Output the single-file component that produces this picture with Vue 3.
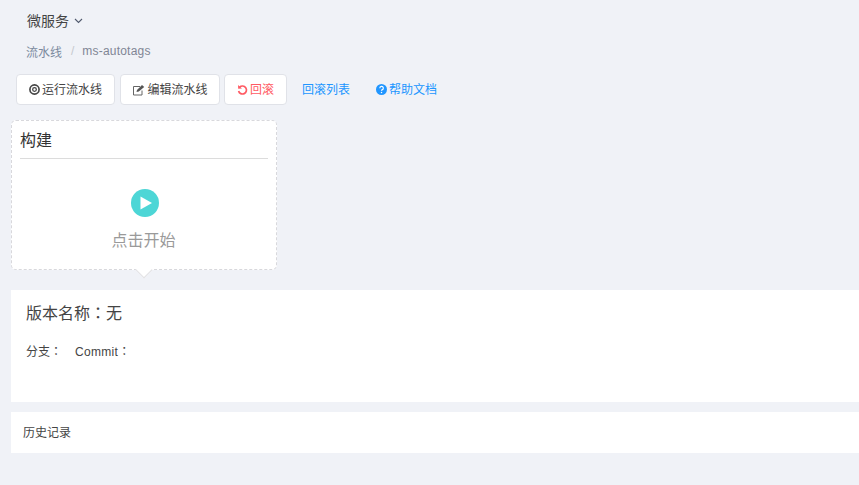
<template>
  <div class="page">
    <div class="top">
      <span class="title">微服务</span>
      <svg class="chev" width="9" height="6" viewBox="0 0 9 6"><path d="M1 1 L4.5 4.5 L8 1" fill="none" stroke="#515a6e" stroke-width="1.1"/></svg>
    </div>
    <div class="crumb">
      <span class="c1">流水线</span><span class="sep">/</span><span class="c2">ms-autotags</span>
    </div>
    <div class="actions">
      <button class="btn w1">
        <svg width="11" height="11" viewBox="0 0 12 12"><circle cx="6" cy="6" r="5" fill="none" stroke="#444" stroke-width="1.8"/><circle cx="6" cy="6" r="2" fill="none" stroke="#444" stroke-width="1.4"/></svg>
        <span>运行流水线</span>
      </button>
      <button class="btn w2">
        <svg width="13" height="12" viewBox="0 0 13 12"><path d="M8 2.5H1.5V11H10V6.5" fill="none" stroke="#666" stroke-width="1"/><path d="M4.5 8 L5 6 L10 1 L12.2 3 L6.8 7.6 Z" fill="#555"/></svg>
        <span>编辑流水线</span>
      </button>
      <button class="btn w3 red">
        <svg width="11" height="12" viewBox="0 0 11 12"><path d="M2.6 3.2 A4 4 0 1 1 1.6 7" fill="none" stroke="#ff5a63" stroke-width="1.7"/><path d="M1 1 L1.2 4.8 L5 4.4 Z" fill="#ff5a63"/></svg>
        <span>回滚</span>
      </button>
      <a class="link l1">回滚列表</a>
      <a class="link l2">
        <svg width="11" height="11" viewBox="0 0 12 12"><circle cx="6" cy="6" r="6" fill="#2196ff"/><path d="M4.2 4.6 A1.9 1.9 0 1 1 6.6 6.4 Q6 6.7 6 7.4" fill="none" stroke="#fff" stroke-width="1.3"/><circle cx="6" cy="9.2" r="0.8" fill="#fff"/></svg>
        <span>帮助文档</span>
      </a>
    </div>
    <div class="stage">
      <div class="stage-title">构建</div>
      <div class="stage-body">
        <svg width="28" height="28" viewBox="0 0 28 28"><circle cx="14" cy="14" r="14" fill="#4dd6d6"/><path d="M9.5 7.5 L21 14 L9.5 20.5 Z" fill="#fff"/></svg>
        <div class="start">点击开始</div>
      </div>
      <i class="arrow"></i>
    </div>
    <section class="panel">
      <div class="version">版本名称<span class="tc">：</span>无</div>
      <div class="meta"><span>分支<span class="tc">：</span></span><span class="commit">Commit<span class="tc">：</span></span></div>
    </section>
    <section class="history">历史记录</section>
  </div>
</template>

<script setup>
</script>

<style scoped>
.page {
  width: 859px;
  height: 485px;
  overflow: hidden;
  background: #f0f2f7;
  font-family: "Liberation Sans", "Noto Sans CJK SC", sans-serif;
  font-size: 12px;
  color: #515a6e;
}
.tc { font-family: "Noto Sans CJK TC", sans-serif; line-height: 1; }
.top {
  display: flex;
  align-items: center;
  gap: 5px;
  height: 20px;
  padding: 10px 0 0 27px;
}
.title { font-size: 14px; color: #444; }
.chev { margin-top: 2px; }
.crumb {
  display: flex;
  align-items: center;
  height: 16px;
  margin-top: 13px;
  padding-left: 26px;
  color: #808695;
}
.c1 { color: #7b8a9e; }
.c2 { letter-spacing: 0.2px; }
.sep { margin: 0 8px 0 9px; color: #c5c8ce; }
.actions {
  display: flex;
  align-items: center;
  height: 31px;
  margin-top: 15px;
  padding-left: 16px;
}
.btn {
  display: flex;
  align-items: center;
  justify-content: center;
  gap: 2px;
  height: 31px;
  padding: 0;
  border: 1px solid #e0e2e8;
  border-radius: 4px;
  background: #fff;
  color: #444;
  font: inherit;
}
.btn span { margin-top: -2px; }
.w1 { width: 99px; margin-right: 5px; }
.w2 { width: 100px; margin-right: 4px; }
.w3 { width: 63px; margin-right: 15px; }
.red { color: #ff5a63; }
.link { display: flex; align-items: center; gap: 2px; color: #2196ff; }
.link span, .l1 { margin-top: -3px; }
.l2 { margin-left: 26px; margin-top: -1px; }
.l2 span { margin-top: -2px; }
.stage {
  position: relative;
  box-sizing: border-box;
  width: 266px;
  height: 150px;
  margin: 15px 0 0 11px;
  padding: 0 8px;
  border: 1px dashed #d8d8dc;
  border-radius: 5px;
  background: #fff;
}
.stage-title {
  box-sizing: border-box;
  height: 38px;
  padding-top: 2px;
  line-height: 36px;
  font-size: 16px;
  color: #333;
  border-bottom: 1px solid #dcdcdc;
}
.stage-body {
  display: flex;
  flex-direction: column;
  align-items: center;
  padding: 30px 0 0 1px;
}
.start { margin: 12px 0 0 -2px; font-size: 16px; line-height: 24px; color: #9a9a9a; }
.arrow {
  position: absolute;
  left: 126px;
  bottom: -7px;
  width: 12px;
  height: 12px;
  background: #fff;
  border-right: 1px solid #e2e2e4;
  border-bottom: 1px solid #e2e2e4;
  transform: rotate(45deg);
  box-sizing: border-box;
}
.panel {
  box-sizing: border-box;
  height: 112px;
  margin: 20px 0 0 11px;
  padding: 13px 15px 0;
  background: #fff;
}
.version { font-size: 16px; line-height: 22px; color: #444; }
.meta { display: flex; gap: 13px; margin-top: 18px; line-height: 18px; color: #444; }
.commit { letter-spacing: 0.3px; }
.history {
  box-sizing: border-box;
  height: 41px;
  margin: 10px 0 0 11px;
  padding: 2px 0 0 12px;
  line-height: 39px;
  background: #fff;
  color: #444;
}
</style>
